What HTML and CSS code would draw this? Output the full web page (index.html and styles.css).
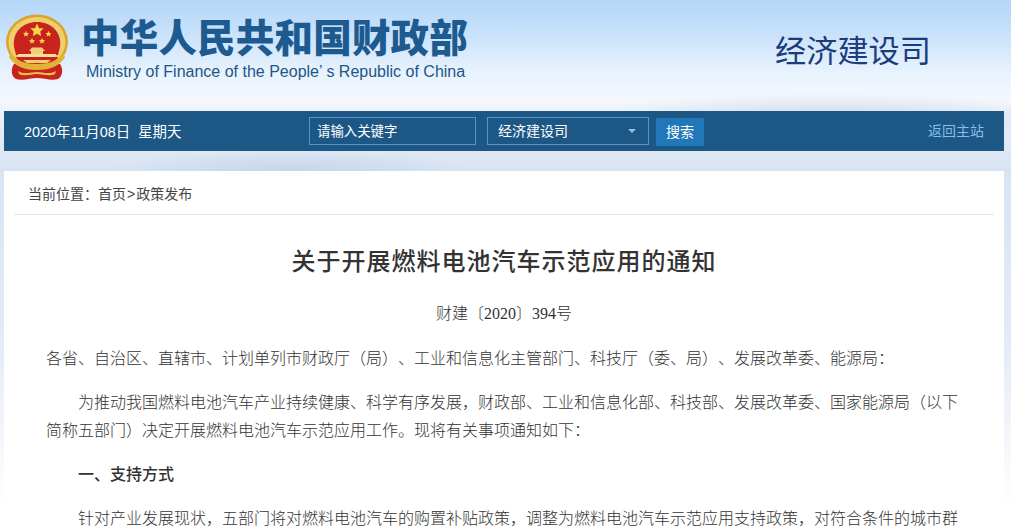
FILE: index.html
```html
<!DOCTYPE html>
<html lang="zh">
<head>
<meta charset="utf-8">
<title>关于开展燃料电池汽车示范应用的通知</title>
<link rel="stylesheet" href="styles.css">
</head>
<body>
<header class="masthead">
  <div class="brand">
    <svg class="emblem" viewBox="0 0 64 68" aria-hidden="true">
      <defs>
        <polygon id="star" points="0,-10 2.9,-3.1 9.5,-3.1 4.7,1.6 5.9,8.1 0,4.6 -5.9,8.1 -4.7,1.6 -9.5,-3.1 -2.9,-3.1" fill="#f6d548"/>
      </defs>
      <path d="M9 50 C5 56 7 63 11 65 C18 67 25 64 32 64 C39 64 46 67 53 65 C57 63 59 56 55 50 Z" fill="#c9231e"/>
      <ellipse cx="32" cy="28" rx="31" ry="27.5" fill="#d8a42f"/>
      <ellipse cx="32" cy="28" rx="28.5" ry="25" fill="#efcf6b"/>
      <path d="M9 33 C7 18 18 8 32 8 C46 8 57 18 55 33 L53 41 L11 41 Z" fill="#c9231e"/>
      <use href="#star" transform="translate(32 16.5) scale(.7)"/>
      <use href="#star" transform="translate(21 20) scale(.32)"/>
      <use href="#star" transform="translate(43.500 20) scale(.32)"/>
      <use href="#star" transform="translate(27 27) scale(.32)"/>
      <use href="#star" transform="translate(37 27) scale(.32)"/>
      <path d="M24 37 L27 33.500 H37 L40 37 H38 V41 H26 V37 Z" fill="#efcf78"/>
      <rect x="13" y="40" width="38" height="4" fill="#f4e09a"/>
      <path d="M11 43 H53 C51 50 43 54 32 54 C21 54 13 50 11 43 Z" fill="#c9231e"/>
      <path d="M6 38 C11 47 20 50 32 50 C44 50 53 47 58 38 L60 43 C54 53 44 56 32 56 C20 56 10 53 4 43 Z" fill="#e2b139"/>
      <path d="M18 46 H46 L42 49 H22 Z" fill="#efcf6b"/>
      <path d="M13 57 C20 61 26 58 32 58 C38 58 44 61 51 57 L50 60 C44 63 38 60 32 60 C26 60 20 63 14 60 Z" fill="#e8c04e"/>
    </svg>
    <div class="brand-text">
      <div class="brand-cn">中华人民共和国财政部</div>
      <div class="brand-en">Ministry of Finance of the People’ s Republic of China</div>
    </div>
  </div>
  <div class="dept">经济建设司</div>
</header>

<nav class="toolbar">
  <div class="date">2020年11月08日&nbsp; 星期天</div>
  <div class="search">
    <div class="field field-input">请输入关键字</div>
    <div class="field field-select">
      <span>经济建设司</span>
      <i class="caret"></i>
    </div>
    <button class="go" type="button">搜索</button>
  </div>
  <a class="back" href="#">返回主站</a>
</nav>

<main class="card">
  <div class="crumbs">当前位置：首页<span class="sep">&gt;</span>政策发布</div>
  <article class="article">
    <h1 class="title">关于开展燃料电池汽车示范应用的通知</h1>
    <p class="docno">财建〔2020〕394号</p>
    <p class="para para-first">各省、自治区、直辖市、计划单列市财政厅（局）、工业和信息化主管部门、科技厅（委、局）、发展改革委、能源局：</p>
    <p class="para indent">为推动我国燃料电池汽车产业持续健康、科学有序发展，财政部、工业和信息化部、科技部、发展改革委、国家能源局（以下简称五部门）决定开展燃料电池汽车示范应用工作。现将有关事项通知如下：</p>
    <p class="para indent heading">一、支持方式</p>
    <p class="para indent last">针对产业发展现状，五部门将对燃料电池汽车的购置补贴政策，调整为燃料电池汽车示范应用支持政策，对符合条件的城市群</p>
  </article>
</main>
</body>
</html>
```
FILE: styles.css
```css
* { box-sizing: border-box; }
html, body { margin: 0; height: 529px; overflow: hidden; }
body {
  font-family: "Liberation Sans", "Noto Sans CJK SC", sans-serif;
  text-spacing-trim: space-all;
  background:
    radial-gradient(ellipse 240px 26px at 830px 118px, rgba(178,196,222,.55), transparent 100%),
    radial-gradient(ellipse 180px 22px at 290px 172px, rgba(178,196,222,.5), transparent 100%),
    linear-gradient(180deg, #b4d6f8 0, #c6e0fa 30px, #e6f2fd 70px, #f4f8fd 100px, #e6edf7 125px, #d9e4f3 170px, #e4ebf6 340px, #fff 510px);
}
.masthead { height: 111px; display: flex; justify-content: space-between; padding: 14px 80px 0 5px; }
.brand { display: flex; gap: 12px; height: 68px; }
.emblem { width: 64px; height: 68px; flex: none; }
.brand-cn { font-size: 38.5px; line-height: 46px; font-weight: 900; color: #1d5a8f; white-space: nowrap; margin-top: 2px; letter-spacing: .2px; }
.brand-en { font-size: 16px; line-height: 20px; color: #1f5688; white-space: nowrap; margin-left: 5px; }
.dept { font-size: 31.2px; line-height: 40px; color: #1a3c7c; margin-top: 18px; white-space: nowrap; }

.toolbar {
  margin: 0 7px 0 4px; height: 40px; background: #1c5786; color: #fff;
  display: flex; align-items: center; font-size: 14.4px; padding: 0 20px;
}
.date { width: 285px; white-space: nowrap; padding-bottom: 2px; }
.search { display: flex; align-items: center; }
.field { height: 28px; border: 1px solid #5b94c4; display: flex; align-items: center; font-size: 14px; padding-bottom: 2px; }
.field-input { width: 167px; padding-left: 7px; margin-right: 11px; font-size: 13.4px; }
.field-select { width: 162px; padding-left: 10px; padding-right: 12px; justify-content: space-between; margin-right: 7px; }
.caret { width: 0; height: 0; margin-top: 2px; border: 4.5px solid transparent; border-top-color: #8fc0e6; border-bottom: 0; }
.go { width: 48px; height: 28px; border: 0; padding: 0 0 1px; margin-top: 1px; background: #2177b8; color: #fff; font: inherit; font-size: 14px; }
.back { margin-left: auto; color: #87bde6; font-size: 14px; text-decoration: none; padding-bottom: 2px; }

.card { margin: 20px 7px 0 4px; background: #fff; height: 358px; overflow: hidden; padding: 0 10px; }
.crumbs { height: 44px; padding: 15px 14px 0; border-bottom: 1px solid #e4e6ea; font-size: 14px; line-height: 17px; color: #444; }
.sep { margin: 0 1px; }
.article { padding: 0 32px; font-family: "Noto Sans CJK SC", "Liberation Sans", sans-serif; color: #333; font-weight: 300; }
.title { margin: 0; padding-top: 25px; font-size: 24px; line-height: 40px; letter-spacing: 1px; text-align: center; font-weight: 500; color: #333; }
.docno { margin: 22px 0 0; text-align: center; font-family: "Liberation Serif", "Noto Sans CJK SC", serif; font-size: 16px; line-height: 24px; }
.para { margin: 0; font-size: 16px; line-height: 28px; }
.para-first { margin-top: 17px; }
.para.indent { text-indent: 32px; margin-top: 16px; }
.para.last { line-height: 24px; margin-top: 18px; }
.heading { font-weight: 500; }
```
